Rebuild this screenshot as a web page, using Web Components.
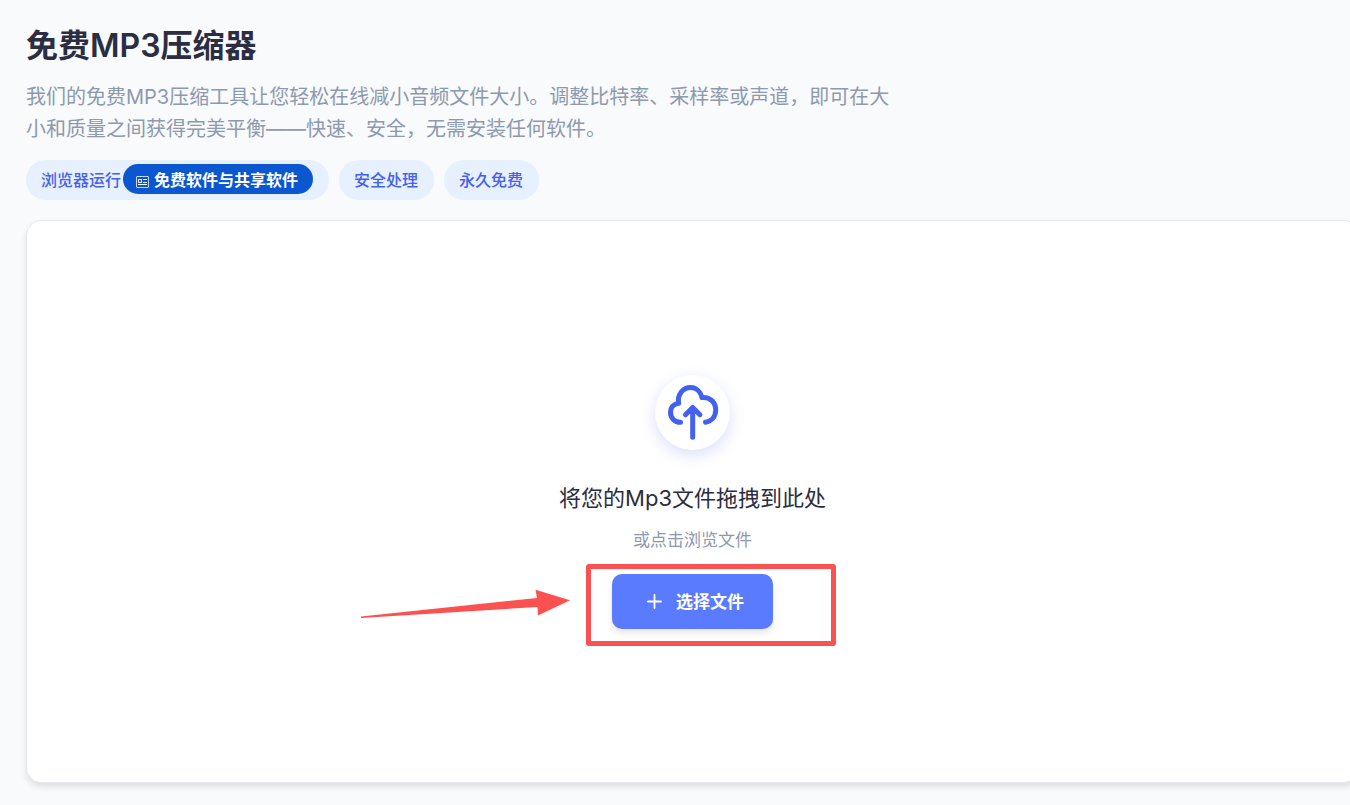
<!DOCTYPE html>
<html lang="zh-CN">
<head>
<meta charset="utf-8">
<meta name="viewport" content="width=device-width, initial-scale=1">
<title>免费MP3压缩器</title>
<style>
  body {
    margin: 0;
    background: #f8fafc;
    font-family: Inter, "Noto Sans CJK SC", sans-serif;
    overflow-x: hidden;
  }
</style>
</head>
<body>

<mp3-page>
  <page-intro>
    <span slot="title">免费MP3压缩器</span>
    我们的免费MP3压缩工具让您轻松在线减小音频文件大小。调整比特率、采样率或声道，即可在大小和质量之间获得完美平衡——快速、安全，无需安装任何软件。
  </page-intro>
  <tag-list>
    <tag-chip>浏览器运行<promo-link slot="extra">免费软件与共享软件</promo-link></tag-chip>
    <tag-chip>安全处理</tag-chip>
    <tag-chip>永久免费</tag-chip>
  </tag-list>
  <drop-zone>
    <span slot="title">将您的Mp3文件拖拽到此处</span>
    <span slot="hint">或点击浏览文件</span>
    <callout-mark slot="action">
      <file-button>选择文件</file-button>
    </callout-mark>
  </drop-zone>
</mp3-page>

<script>
function define(name, html) {
  const template = document.createElement('template')
  template.innerHTML = html
  customElements.define(name, class extends HTMLElement {
    constructor() {
      super()
      this.attachShadow({mode: 'open'})
      this.shadowRoot.appendChild(template.content.cloneNode(true))
    }
  })
}

// <mp3-page>
define('mp3-page', `
<style>
  :host {
    display: flex;
    flex-direction: column;
    box-sizing: border-box;
    min-height: 100vh;
    padding: 26px 0 22px 26px;
  }
</style>
<slot></slot>
`)

// <page-intro>
define('page-intro', `
<style>
  :host { display: block; }
  h1 {
    margin: 0 0 15px;
    font-size: 32px;
    line-height: 40px;
    font-weight: 600;
    color: #2b2d42;
  }
  p {
    margin: 0;
    max-width: 870px;
    font-size: 20px;
    line-height: 32px;
    color: #8d99ae;
  }
</style>
<h1><slot name="title"></slot></h1>
<p><slot></slot></p>
`)

// <tag-list>
define('tag-list', `
<style>
  :host {
    display: flex;
    flex-wrap: wrap;
    gap: 10px;
    margin: 15px 0 20px;
  }
</style>
<slot></slot>
`)

// <tag-chip>
define('tag-chip', `
<style>
  :host {
    display: flex;
    align-items: center;
    gap: 2px;
    box-sizing: border-box;
    height: 40px;
    padding: 0 16px 2px 15px;
    border-radius: 20px;
    background: #e6f0ff;
    color: #4361ee;
    font-size: 16px;
    font-weight: 500;
  }
</style>
<span><slot></slot></span>
<slot name="extra"></slot>
`)

// <promo-link>
define('promo-link', `
<style>
  :host { display: block; }
  a {
    display: flex;
    align-items: center;
    gap: 5px;
    height: 30px;
    padding: 0 15px 0 13px;
    border-radius: 15px;
    background: #0b57d0;
    color: #fff;
    font-weight: 700;
    text-decoration: none;
  }
  svg { display: block; margin-top: 5px; }
</style>
<a href="#">
  <svg width="13" height="12" viewBox="0 0 13 12" fill="none" stroke="#c4d8f6" aria-hidden="true">
    <rect x=".5" y=".5" width="12" height="11" rx=".5"/>
    <path stroke="#fff" d="M2.500 3.500h3v3h-3zM7 3.500h4M7 6.500h4M2 8.500h9"/>
  </svg>
  <slot></slot>
</a>
`)

// <drop-zone>
define('drop-zone', `
<style>
  :host {
    display: flex;
    flex: 1;
    flex-direction: column;
    align-items: center;
    justify-content: center;
    box-sizing: border-box;
    /* the panel runs past the right edge of the window */
    margin-right: -9px;
    padding: 40px 20px;
    border: 1px solid #e5e8ec;
    border-radius: 15px;
    background: #fff;
    box-shadow: 0 4px 6px rgba(0, 0, 0, .1);
  }
  .icon {
    width: 75px;
    height: 75px;
    border-radius: 50%;
    background: #fff;
    box-shadow: 0 5px 15px rgba(67, 97, 238, .2);
  }
  svg { display: block; }
  h2 {
    margin: 31px 0 12px;
    font-size: 22px;
    line-height: 34px;
    font-weight: 400;
    color: #2b2d42;
  }
  p {
    margin: 0 0 21px;
    font-size: 17px;
    line-height: 26px;
    color: #8d99ae;
  }
</style>
<div class="icon">
  <svg width="75" height="75" viewBox="0 0 75 75" fill="none" stroke="#4361ee" stroke-width="5" stroke-linecap="round" stroke-linejoin="round" aria-hidden="true">
    <path d="M25.5 47.3C19.5 47.3 15.5 43 15.5 37.3C15.5 32.5 18.5 28.8 23.7 28.2C22 19.5 28.2 12.6 35.5 12.6C41.2 12.6 45.6 16.6 47 22.6C55 21.8 60.7 27.5 60.7 34.8C60.7 41.5 56.5 46.3 50.5 47.3"/>
    <path d="M37.7 62.2V33.5M30.5 39.7L37.7 32.5L44.9 39.7"/>
  </svg>
</div>
<h2><slot name="title"></slot></h2>
<p><slot name="hint"></slot></p>
<slot name="action"></slot>
`)

// <file-button>
define('file-button', `
<style>
  :host { display: block; }
  button {
    display: flex;
    align-items: center;
    gap: 14px;
    height: 55px;
    padding: 0 29px 0 35px;
    border: 0;
    border-radius: 10px;
    background: #5b7bff;
    box-shadow: 0 4px 6px rgba(0, 0, 0, .1);
    color: #fff;
    font: inherit;
    font-size: 17px;
    font-weight: 600;
    cursor: pointer;
  }
  svg { display: block; }
  span { padding-bottom: 2px; }
</style>
<button type="button">
  <svg width="15" height="15" viewBox="0 0 15 15" fill="none" stroke="#fff" stroke-width="1.8" stroke-linecap="round" aria-hidden="true">
    <path d="M7.5 1v13M1 7.5h13"/>
  </svg>
  <span><slot></slot></span>
</button>
`)

// <callout-mark> red frame and arrow laid over its content
define('callout-mark', `
<style>
  :host { display: block; position: relative; }
  .frame {
    position: absolute;
    top: -10px;
    left: -26px;
    right: -63px;
    bottom: -17px;
    border: 5px solid #fc5151;
    border-radius: 3px;
    pointer-events: none;
  }
  .arrow {
    position: absolute;
    top: 15px;
    right: calc(100% + 42px);
    pointer-events: none;
  }
</style>
<slot></slot>
<div class="frame"></div>
<svg class="arrow" width="210" height="30" viewBox="0 0 210 30" fill="#fc5151" aria-hidden="true">
  <path d="M1 27.6L177 9L175.5 .8L210 11.2L178 26.5L177.5 18L1 29Z"/>
</svg>
`)
</script>
</body>
</html>
